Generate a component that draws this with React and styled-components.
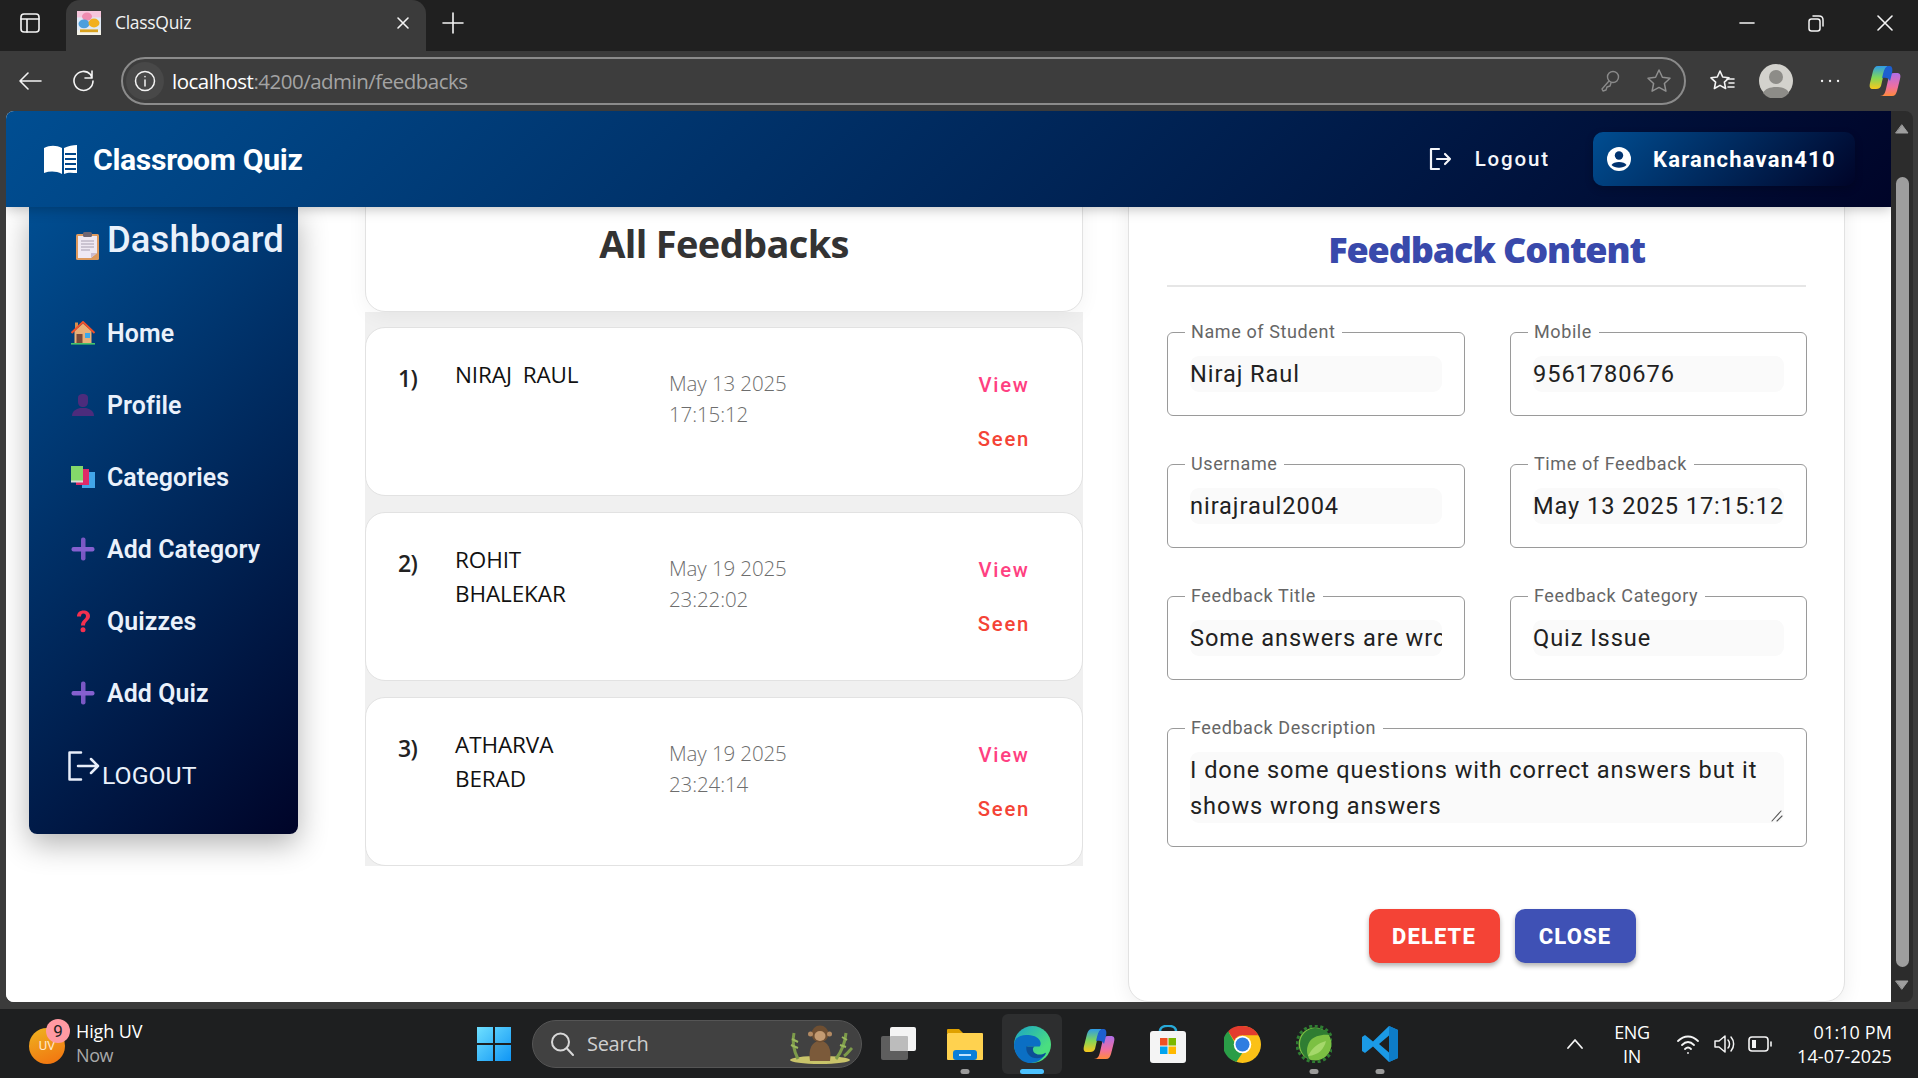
import React from "react";
import styled, { createGlobalStyle } from "styled-components";

const Global = createGlobalStyle`
  html, body { margin: 0; padding: 0; background: #3b3b3b; overflow: hidden; }
  * { box-sizing: border-box; }
  #root { width: 1918px; height: 1078px; }
`;
const Screen = styled.div`
  width: 1918px; height: 1078px; display: flex; flex-direction: column;
  font-family: Roboto, sans-serif; background: #3b3b3b; overflow: hidden;
`;
/* browser chrome */
const TabBar = styled.div`
  height: 51px; flex: none; background: #202020; display: flex; align-items: center; padding: 0 0 5px 20px;
`;
const ChromeGlyph = styled.svg`
  display: block; flex: none; fill: none; stroke: ${p => p.$c || "#f4f4f4"}; stroke-width: ${p => p.$w || 1.7}; stroke-linecap: round; stroke-linejoin: round;
`;
const Tab = styled.div`
  width: 360px; height: 51px; margin-left: 26px; background: #3b3b3b; border-radius: 14px 14px 0 0; align-self: flex-start;
  display: flex; align-items: center; padding: 0 16px 5px 11px;
`;
const TabTitle = styled.span`
  flex: 1; margin-left: 14px; color: #f2f2f2; font: 400 17.5px "Open Sans", sans-serif; letter-spacing: -0.3px; margin-top: -2px;
`;
const NewTab = styled.div` margin-left: 16px; `;
const WindowControls = styled.div`
  margin-left: auto; display: flex; align-items: center; gap: 53px; padding-right: 25px;
`;
const Toolbar = styled.div`
  height: 60px; flex: none; background: #3b3b3b; display: flex; align-items: center; padding: 0 14px 0 18px;
`;
const NavGap = styled.div` width: ${p => p.$w}px; flex: none; `;
const AddressPill = styled.div`
  width: 1565px; height: 48px; border: 2px solid #8b8b8b; border-radius: 24px; background: #3d3d3d;
  display: flex; align-items: center; padding: 0 12px 0 3px; flex: none;
`;
const InfoWrap = styled.div`
  width: 38px; height: 38px; border-radius: 50%; background: #484848; display: flex; align-items: center; justify-content: center; flex: none;
`;
const Url = styled.div`
  margin-left: 8px; font: 400 20.5px "Open Sans", sans-serif; letter-spacing: -0.5px; color: #a4a4a4; flex: 1; margin-top: -1px;
  b { font-weight: 400; color: #fff; }
`;
const PillIcons = styled.div` display: flex; align-items: center; gap: 26px; `;
const ToolIcons = styled.div` display: flex; align-items: center; margin-left: 23px; `;

/* page */
const ViewRow = styled.div`
  flex: 1; min-height: 0; display: flex; padding: 0 5px 7px 6px; background: #3b3b3b;
`;
const Page = styled.div`
  width: 1885px; background: #fff; border-radius: 8px 0 0 8px; overflow: hidden; display: flex; flex-direction: column;
`;
const Scrollbar = styled.div`
  width: 22px; background: #2c2c2c; border-radius: 0 8px 8px 0; display: flex; flex-direction: column; align-items: center; padding-top: 13px;
`;
const ScrollThumb = styled.div`
  width: 13px; height: 790px; background: #9e9e9e; border-radius: 7px; margin: 43px 0 13px;
`;
const Header = styled.header`
  height: 96px; flex: none; position: relative; z-index: 3;
  background: linear-gradient(135deg, #004e92, #000428);
  box-shadow: 0 2px 12px rgba(0,0,0,.25);
  display: flex; align-items: center; padding: 0 36px 0 37px; color: #fff;
`;
const Brand = styled.div`
  font-weight: 700; font-size: 30.2px; margin-left: 15px; letter-spacing: -0.35px; color: #fff;
`;
const HeaderLogout = styled.div`
  margin-left: auto; display: flex; align-items: center; gap: 23px; margin-right: 43px; font-weight: 500; font-size: 20.5px; letter-spacing: 1.85px; color: #f4f6fa;
`;
const UserChip = styled.div`
  width: 262px; height: 54px; border-radius: 10px; background: linear-gradient(135deg, #004e92, #000428);
  box-shadow: 0 3px 8px rgba(0,0,0,.2); display: flex; align-items: center; padding-left: 14px; gap: 22px;
  font-weight: 700; font-size: 22px; letter-spacing: 1.2px; color: #fff;
`;
const Main = styled.div`
  flex: 1; min-height: 0; display: flex; align-items: flex-start; background: #fff;
`;
const Sidebar = styled.aside`
  width: 269px; height: 627px; margin-left: 23px; flex: none; border-radius: 0 0 8px 8px;
  background: linear-gradient(135deg, #004e92, #000428);
  box-shadow: 0 10px 30px rgba(0,0,0,.3); color: #eaf1fb; display: flex; flex-direction: column; padding-left: 42px;
`;
const SideTitle = styled.div`
  display: flex; align-items: flex-start; height: 90px; padding: 9px 0 0 5px;
  font-weight: 500; font-size: 36.4px; line-height: 48px; letter-spacing: .1px; gap: 8px;
  svg { margin-top: 16px; }
`;
const SideItem = styled.div`
  height: 72px; display: flex; align-items: center; gap: 12px; font-weight: 600; font-size: 24.9px; letter-spacing: .1px;
`;
const SideLogout = styled.div`
  display: flex; align-items: flex-start; margin: 22px 0 0 -3px; gap: 2px; font-weight: 400; font-size: 24.8px;
  line-height: 32px;
  span { margin-top: 9px; }
`;
const Center = styled.section`
  width: 718px; flex: none; margin-left: 67px; display: flex; flex-direction: column; margin-top: -24px;
`;
const CardBase = styled.div`
  background: #fff; border: 1px solid #e2e2e2; border-radius: 20px;
`;
const TitleCard = styled(CardBase)`
  height: 129px; box-shadow: 0 4px 20px rgba(0,0,0,.05); padding-top: 34px; text-align: center; position: relative; z-index: 1;
  font: 700 38px/50px "Open Sans", sans-serif; letter-spacing: -0.65px; color: #333;
`;
const ListWrap = styled.div`
  background: #f0f0f0; display: flex; flex-direction: column; gap: 16px; padding-top: 15px;
`;
const ItemCard = styled(CardBase)`
  height: 169px; display: grid; grid-template-columns: 57px 214px 285px 100px; padding: 30px 0 0 32px;
  align-items: start; align-content: start;
`;
const Num = styled.div`
  font: 600 23px/40px "Open Sans", sans-serif; color: #222; letter-spacing: -0.6px;
`;
const Name = styled.div`
  font: 500 22.5px/34px "Open Sans", sans-serif; color: #111; letter-spacing: -0.1px; word-spacing: 5px; width: 150px;
`;
const DateText = styled.div`
  font: 300 20.5px/31px "Open Sans", sans-serif; color: #6d6d6d; letter-spacing: -0.1px; width: 140px; margin-top: 10px;
`;
const ActionCol = styled.div`
  display: flex; flex-direction: column; align-items: center; gap: 28px; margin-top: 14px;
`;
const TextAction = styled.div`
  font-weight: 500; font-size: 20.3px; line-height: 26px; letter-spacing: 1.75px; color: ${p => p.$c};
`;
const DetailCard = styled(CardBase)`
  width: 717px; height: 820px; margin-left: 45px; margin-top: -25px; flex: none; padding: 25px 38px 0; box-shadow: 0 4px 20px rgba(0,0,0,.07);
  display: flex; flex-direction: column;
`;
const DetailTitle = styled.div`
  height: 79px; border-bottom: 2px solid #e6e6e6; text-align: center; padding-top: 18px; flex: none;
  font: 800 36px/48px "Open Sans", sans-serif; letter-spacing: -1.15px; color: #3949ab;
`;
const FieldGrid = styled.div`
  display: grid; grid-template-columns: 298px 297px; column-gap: 45px; row-gap: 37px; margin-top: 34px;
`;
const Fieldset = styled.fieldset`
  margin: 0; padding: 13px 22px 23px 22px; min-width: 0; border: 1px solid #9a9a9a; border-radius: 6px; grid-column: ${p => p.$wide ? "1 / -1" : "auto"};
`;
const Legend = styled.legend`
  margin-left: -5px; padding: 0 7px 0 6px; font-size: 18px; line-height: 22px; letter-spacing: .6px; color: #666; font-weight: 400;
`;
const Value = styled.div`
  height: 36px; background: #fafafa; border-radius: 9px; font-size: 23.6px; line-height: 36px; letter-spacing: .93px; color: #212121;
  white-space: nowrap; overflow: hidden;
`;
const TimeValue = styled(Value)` overflow: visible; `;
const AreaValue = styled.div`
  height: 71px; background: #fafafa; border-radius: 9px; font-size: 23.6px; line-height: 36px; letter-spacing: .93px; color: #212121; position: relative;
  svg { position: absolute; right: 1px; bottom: 1px; }
`;
const Buttons = styled.div`
  display: flex; justify-content: center; gap: 15px; margin-top: 62px; margin-left: 31px;
`;
const ActionButton = styled.div`
  height: 54px; width: ${p => p.$w}px; border-radius: 10px; background: ${p => p.$bg}; color: #fff; font-weight: 800; font-size: 22px; letter-spacing: 1.1px;
  display: flex; align-items: center; justify-content: center; box-shadow: 0 3px 5px rgba(0,0,0,.3);
`;
/* taskbar */
const Taskbar = styled.footer`
  height: 69px; flex: none; background: #1e1f20; display: flex; align-items: center; color: #fff;
`;
const Weather = styled.div`
  width: 476px; flex: none; display: flex; align-items: center; padding-left: 29px; gap: 11px;
`;
const UvIcon = styled.div`
  width: 36px; height: 36px; border-radius: 50%; background: linear-gradient(160deg, #eeb420, #f2700f); font-size: 13px; display: flex; align-items: center; justify-content: center; color: #ffe9c8; margin-top: 4px; position: relative;
`;
const UvBadge = styled.div`
  position: absolute; right: -5px; top: -9px; width: 24px; height: 24px; border-radius: 50%; background: #ff9aa2; color: #222; font-size: 17px; display: flex; align-items: center; justify-content: center;
`;
const WeatherText = styled.div`
  font: 400 18px/24px "Open Sans", sans-serif; letter-spacing: -0.1px; margin-top: -1px;
  small { display: block; font-size: 18px; color: #a9a9a9; letter-spacing: -0.4px; }
`;
const SearchBox = styled.div`
  width: 330px; height: 48px; border-radius: 24px; background: #414141; border: 1px solid #555; margin-left: 20px; display: flex; align-items: center; padding: 0 7px 0 17px; font: 400 20px "Open Sans", sans-serif; color: #cfcfcf; letter-spacing: -0.3px; flex: none; gap: 13px;
  svg:last-child { margin-left: auto; }
`;
const TaskSlot = styled.div`
  width: ${p => p.$w}px; margin-left: ${p => p.$m}px; height: 60px; flex: none; display: flex; align-items: center; justify-content: center; position: relative; margin-top: 1px;
  border-radius: 6px; background: ${p => p.$active ? "#2d2e2f" : "transparent"};
`;
const RunDot = styled.div`
  position: absolute; left: 50%; bottom: 0; width: ${p => p.$active ? 24 : 9}px; height: 5px; border-radius: 3px; transform: translateX(-50%); background: ${p => p.$active ? "#4cc2ff" : "#9b9b9b"};
`;
const Tray = styled.div`
  margin-left: auto; display: flex; align-items: center; padding-right: 26px; font: 400 18px/24px "Open Sans", sans-serif; letter-spacing: -0.4px;
`;
const Lang = styled.div` text-align: center; margin-left: 30px; width: 36px; `;
const Clock = styled.div` text-align: right; margin-left: 24px; width: 96px; letter-spacing: .1px; `;
const TrayIcons = styled.div` display: flex; align-items: center; gap: 12px; margin-left: 26px; `;

const Ic = ({ w = 24, h = 24, vb, c, sw, children }) => (
  <ChromeGlyph width={w} height={h} viewBox={vb || `0 0 ${w} ${h}`} $c={c} $w={sw}>{children}</ChromeGlyph>
);
const Solid = styled.svg` display: block; flex: none; `;

const Favicon = () => (
  <Solid width="24" height="24" viewBox="0 0 24 30" preserveAspectRatio="none">
    <rect width="24" height="30" fill="#dfe9f6" />
    <rect width="24" height="8" fill="#f6c6dc" />
    <circle cx="10" cy="7" r="5" fill="#f08cb0" />
    <circle cx="7" cy="16" r="5.500" fill="#4c9fdc" />
    <circle cx="17" cy="15" r="5.500" fill="#f2b01e" />
    <rect y="24" width="24" height="6" fill="#f5f3e8" />
    <rect x="3" y="23" width="18" height="3.500" fill="#d9a21f" />
  </Solid>
);
const BookLogo = () => (
  <Solid width="35" height="30" viewBox="0 0 35 30">
    <path d="M1 4 C7 1 13 1 19 4 V30 C13 27 7 27 1 29 Z" fill="#fff" />
    <path d="M21 4 C25 2 30 1 34 1 V29 C30 29 25 28 21 30 Z" fill="#fff" />
    <path d="M22 10h11M22 15h11M22 20h11M22 25h11" stroke="#00468a" strokeWidth="1.8" />
  </Solid>
);
const LogoutIcon = () => (
  <Ic w={24} h={24} c="#f4f6fa" sw={2.200}>
    <path d="M11 2H3v20h8M9 12h13M17 7l5 5-5 5" />
  </Ic>
);
const SideLogoutIcon = () => (
  <Ic w={32} h={30} c="#e8eefa" sw={2.500}>
    <path d="M13 1.500H1.500v27H13M10 15h20M23 8l7 7-7 7" />
  </Ic>
);
const UserCircle = () => (
  <Solid width="24" height="26" viewBox="0 0 24 26">
    <circle cx="12" cy="13" r="12" fill="#fff" />
    <circle cx="12" cy="9.5" r="4.2" fill="#01336f" />
    <path d="M4.5 19c2-4 13-4 15 0-3.5 3.6-11.5 3.6-15 0Z" fill="#01336f" />
  </Solid>
);
const Clipboard = () => (
  <Solid width="23" height="28" viewBox="0 0 23 28">
    <rect x="0" y="2" width="23" height="26" rx="1.5" fill="#dd9a5e" />
    <path d="M2 4h19v17l-6 5H2Z" fill="#efe9f3" />
    <path d="M15 26l6-5h-6Z" fill="#cbbcd0" />
    <rect x="7" y="0" width="9" height="5" rx="1.5" fill="#6f6673" />
    <path d="M5 9h13M5 12h13M5 15h13M5 18h9" stroke="#a79fb0" strokeWidth="1" />
  </Solid>
);
const House = () => (
  <Solid width="24" height="24" viewBox="0 0 24 24">
    <rect x="4" y="1.5" width="3" height="6" fill="#d58f4e" />
    <path d="M3.5 10 12 2.5 20.5 10V22h-17Z" fill="#e8b078" />
    <path d="M0.5 12 12 1l11.5 11" fill="none" stroke="#f0512a" strokeWidth="2" />
    <rect x="5.5" y="13" width="6" height="9" fill="#7a4a3a" />
    <rect x="14" y="12" width="5" height="5" fill="#3aa8ea" />
    <rect y="22" width="24" height="1.6" fill="#45c46a" />
  </Solid>
);
const Bust = () => (
  <Solid width="24" height="24" viewBox="0 0 24 24">
    <path d="M7 5c0-3 2-4 5-4s5 1 5 4v4c0 3-2 5-5 5s-5-2-5-5Z" fill="#4c2c7c" />
    <path d="M1 23c0-5 4-7 8-8h6c4 1 8 3 8 8Z" fill="#4c2c7c" />
  </Solid>
);
const Books = () => (
  <Solid width="24" height="23" viewBox="0 0 24 23">
    <rect x="11" y="6" width="13" height="16" fill="#42a5e8" />
    <rect x="5" y="3" width="13" height="16" fill="#e02a68" />
    <rect x="0" y="0" width="12" height="16" fill="#84d86a" />
    <rect x="0" y="14.5" width="12" height="2" fill="#d8dfd8" />
  </Solid>
);
const Plus = () => (
  <Solid width="24" height="24" viewBox="0 0 24 24">
    <rect x="10" y="0.5" width="4.5" height="23" rx="2" fill="#7a58c4" />
    <rect x="0.5" y="10" width="23" height="4.5" rx="2" fill="#8560cf" />
  </Solid>
);
const Question = () => (
  <Solid width="24" height="24" viewBox="0 0 24 24">
    <path d="M6 7.5C6 3.5 9 1.5 12.5 1.5S19 3.500 19 7c0 4.500-5 5-5 9.500h-4c0-5.500 5-6 5-9.500 0-1.500-1-2.500-2.600-2.500C10.800 4.500 10 5.800 10 7.500Z" fill="#f4304f" />
    <circle cx="12" cy="20.800" r="2.500" fill="#f4304f" />
  </Solid>
);
const Resize = () => (
  <Ic w={12} h={12} c="#555" sw={1.1}><path d="M1 11 10 1M6 11l5-5" /></Ic>
);
const Monkey = () => (
  <Solid width="68" height="42" viewBox="0 0 68 42">
    <ellipse cx="34" cy="37" rx="30" ry="4" fill="#c9c46a" />
    <path d="M12 36C8 28 6 18 8 10M50 36c6-8 9-16 10-26M58 33c3-2 6-6 8-8" stroke="#7d9b4a" strokeWidth="3" fill="none" />
    <path d="M6 16l6 3M5 22l7 3M56 14l5 3M54 22l6 2" stroke="#9ab85d" strokeWidth="2" />
    <path d="M24 38c-2-12 2-20 10-20s12 8 10 20Z" fill="#7b5a3a" />
    <circle cx="34" cy="11" r="8.500" fill="#6f4f32" />
    <ellipse cx="34" cy="13" rx="5.500" ry="5" fill="#c49b72" />
    <circle cx="24.500" cy="11" r="2.500" fill="#b38a62" /><circle cx="43.500" cy="11" r="2.500" fill="#b38a62" />
  </Solid>
);
const TaskView = () => (
  <Solid width="36" height="36" viewBox="0 0 36 36">
    <rect x="1" y="10" width="27" height="24" rx="2" fill="#5e5e5e" />
    <rect x="10" y="1" width="26" height="24" rx="2" fill="#f4f4f4" />
    <rect x="10" y="10" width="18" height="15" rx="1" fill="#bcbcbc" />
  </Solid>
);
const Folder = () => (
  <Solid width="36" height="33" viewBox="0 0 36 33">
    <path d="M0 2a1 1 0 0 1 1-1h11l4 4H0Z" fill="#dfa100" />
    <rect y="5" width="36" height="27" rx="1" fill="#ffd24f" />
    <rect x="6" y="22" width="24" height="10" fill="#0a7fd8" rx="3" />
    <rect x="12" y="26" width="12" height="2" fill="#bfe2ff" />
  </Solid>
);
const Edge = ({ s = 37 }) => (
  <Solid width={s} height={s} viewBox="0 0 36 36">
    <defs>
      <linearGradient id="eg" x1="0" y1="0" x2="1" y2="1"><stop offset="0" stopColor="#1aa3c8" /><stop offset=".7" stopColor="#4ade80" /></linearGradient>
    </defs>
    <circle cx="18" cy="18" r="18" fill="url(#eg)" />
    <path d="M0 18C1 9 9 8 16 9c8 1 12 7 9 11H13c-1 6 5 10 12 9 3-1 5-2 6-3-3 6-8 10-15 10C7 36 0 28 0 18Z" fill="#0b6fc4" />
    <path d="M12 20c-1 8 6 13 14 11 3-1 5-3 5-5-5 3-10 2-12-1-1-2-1-4 1-5Z" fill="#0c4f96" />
  </Solid>
);
const Copilot = ({ s = 34 }) => (
  <Solid width={s} height={s} viewBox="0 0 34 34">
    <defs>
      <linearGradient id="cp1" x1="0" y1="0" x2="0" y2="1"><stop offset="0" stopColor="#2f9be8" /><stop offset=".5" stopColor="#7fd65a" /><stop offset="1" stopColor="#f8c71c" /></linearGradient>
      <linearGradient id="cp2" x1="0" y1="0" x2="0" y2="1"><stop offset="0" stopColor="#b06ee8" /><stop offset=".6" stopColor="#f06fa0" /><stop offset="1" stopColor="#ff8a3c" /></linearGradient>
    </defs>
    <path d="M10 2h12c-4 0-5 3-6 7l-3 13c-1 2-2 3-5 3H5C2 25 1 23 2 19L5 7c1-3 2-5 5-5Z" fill="url(#cp1)" />
    <path d="M24 32H12c4 0 5-3 6-7l3-13c1-2 2-3 5-3h3c3 0 4 2 3 6l-3 12c-1 3-2 5-5 5Z" fill="url(#cp2)" />
    <path d="M22 2h-2c-3 1-4 4-5 8l-1 4c4-1 7 0 8 3l2-8c1-4 0-7-2-7Z" fill="#1d5fd0" />
  </Solid>
);
const Store = () => (
  <Solid width="36" height="38" viewBox="0 0 36 38">
    <path d="M10 6c0-7 16-7 16 0" fill="none" stroke="#27a9d8" strokeWidth="2.500" />
    <rect y="6" width="36" height="32" rx="3" fill="#f4f4f4" />
    <rect x="10" y="13" width="7.500" height="7.500" fill="#ef5024" />
    <rect x="18.500" y="13" width="7.500" height="7.500" fill="#7cb800" />
    <rect x="10" y="21.500" width="7.500" height="7.500" fill="#00a4ef" />
    <rect x="18.500" y="21.500" width="7.500" height="7.500" fill="#ffb900" />
  </Solid>
);
const Chrome = () => (
  <Solid width="37" height="37" viewBox="0 0 36 36">
    <circle cx="18" cy="18" r="18" fill="#fbc116" />
    <path d="M18 0a18 18 0 0 1 15.600 9H18a9 9 0 0 0-8 5L4 5A18 18 0 0 1 18 0Z" fill="#e33b2e" />
    <path d="M4 5l7 12 7 9-6 9A18 18 0 0 1 4 5Z" fill="#2a9d47" />
    <circle cx="18" cy="18" r="8.500" fill="#fff" /><circle cx="18" cy="18" r="6.800" fill="#2f7de1" />
  </Solid>
);
const Spring = () => (
  <Solid width="36" height="38" viewBox="0 0 36 38">
    <circle cx="19" cy="19" r="16.500" fill="#7cc043" />
    <circle cx="19" cy="19" r="18" fill="none" stroke="#2f7d32" strokeWidth="3" strokeDasharray="3 2.600" />
    <path d="M19 3a16 16 0 0 0-15 16c0 7 4 13 10 16-4-6-4-13 0-19 4-5 12-7 20-6-3-4-9-7-15-7Z" fill="#2f7d32" />
    <path d="M12 31c4-8 10-13 18-15-2 8-7 14-18 15Z" fill="#a5d86b" />
  </Solid>
);
const VsCode = () => (
  <Solid width="36" height="38" viewBox="0 0 36 38">
    <path d="M27 1l9 4v28l-9 4L11 21.500 3 28l-3-2V12l3-2 8 6.500Zm0 9.500L17 19l10 8.500Z" fill="#1b9ae6" />
    <path d="M27 1l9 4v28l-9 4Z" fill="#0d7cc8" />
  </Solid>
);
const WindowsLogo = () => (
  <Solid width="36" height="36" viewBox="0 0 36 36">
    <defs>
      <linearGradient id="wl" x1="0" y1="0" x2="1" y2="1"><stop offset="0" stopColor="#6fe0ff" /><stop offset="1" stopColor="#0f95f5" /></linearGradient>
    </defs>
    <path d="M1 1h16v16H1ZM19 1h16v16H19ZM1 19h16v16H1ZM19 19h16v16H19Z" fill="url(#wl)" />
  </Solid>
);
const Avatar = () => (
  <Solid width="34" height="34" viewBox="0 0 34 34">
    <circle cx="17" cy="17" r="17" fill="#d3d2cd" />
    <circle cx="17" cy="13" r="7" fill="#8d8c88" />
    <path d="M4 29c3-8 23-8 26 0a17 17 0 0 1-26 0Z" fill="#8d8c88" />
  </Solid>
);

const menu = [
  [House, "Home"], [Bust, "Profile"], [Books, "Categories"], [Plus, "Add Category"], [Question, "Quizzes"], [Plus, "Add Quiz"],
];
const items = [
  ["1)", "NIRAJ RAUL", "May 13 2025", "17:15:12"],
  ["2)", "ROHIT BHALEKAR", "May 19 2025", "23:22:02"],
  ["3)", "ATHARVA BERAD", "May 19 2025", "23:24:14"],
];
const fields = [
  ["Name of Student", "Niraj Raul"], ["Mobile", "9561780676"], ["Username", "nirajraul2004"],
  ["Time of Feedback", "May 13 2025 17:15:12", true], ["Feedback Title", "Some answers are wrong"], ["Feedback Category", "Quiz Issue"],
];

export default function App() {
  return (
    <Screen>
      <Global />
      <TabBar>
        <Ic w={20} h={20} sw={1.6}><rect x="1" y="1" width="18" height="18" rx="3" /><path d="M1 6h18M7 6v13" /></Ic>
        <Tab>
          <Favicon />
          <TabTitle>ClassQuiz</TabTitle>
          <Ic w={14} h={14} sw={1.6}><path d="M2 2l10 10M12 2 2 12" /></Ic>
        </Tab>
        <NewTab><Ic w={22} h={22} sw={1.6}><path d="M11 1v20M1 11h20" /></Ic></NewTab>
        <WindowControls>
          <Ic w={16} h={4} sw={1.6}><path d="M1 2h14" /></Ic>
          <Ic w={16} h={17} sw={1.5}><rect x="1" y="4" width="11" height="12" rx="2.500" /><path d="M5 1h6c3 0 4 1 4 4v6" /></Ic>
          <Ic w={16} h={16} sw={1.6}><path d="M1 1l14 14M15 1 1 15" /></Ic>
        </WindowControls>
      </TabBar>
      <Toolbar>
        <Ic w={24} h={20} sw={1.6} ><path d="M23 10H2M10 2l-8 8 8 8" /></Ic>
        <NavGap $w={30} />
        <Ic w={24} h={24} sw={1.6}><path d="M20 2v7h-7M21 12a9.500 9.500 0 1 1-2.500-6.500L20 9" /></Ic>
        <NavGap $w={25} />
        <AddressPill>
          <InfoWrap><Ic w={22} h={22} sw={1.5}><circle cx="11" cy="11" r="9.500" /><path d="M11 10v6M11 6.500v.2" /></Ic></InfoWrap>
          <Url><b>localhost</b>:4200/admin/feedbacks</Url>
          <PillIcons>
            <Ic w={20} h={24} c="#8a8a8a" sw={1.4}><circle cx="13" cy="8" r="5.500" /><path d="M9 12 2 20l1 2 3-1 1-3 3-1 1-3" /></Ic>
            <Ic w={26} h={26} c="#8f8f8f" sw={1.5}><path d="M13 2l3.400 7.200 7.600 1-5.600 5.300 1.500 7.700L13 19.400l-6.900 3.800 1.500-7.700L2 10.200l7.600-1Z" /></Ic>
          </PillIcons>
        </AddressPill>
        <ToolIcons>
          <Ic w={26} h={26} sw={1.6}><path d="M11 3l2.700 6 6.300.800-4.600 4.300 1.200 6.400L11 17.400l-5.600 3.100 1.200-6.400L2 9.800 8.300 9Z" /><path d="M18 11h7M20 15h5M19 19h6" /></Ic>
          <NavGap $w={24} />
          <Avatar />
          <NavGap $w={27} />
          <Ic w={20} h={4} sw={2.300}><path d="M2 2h.1M10 2h.1M18 2h.1" /></Ic>
          <NavGap $w={28} />
          <Copilot />
        </ToolIcons>
      </Toolbar>
      <ViewRow>
        <Page>
          <Header>
            <BookLogo />
            <Brand>Classroom Quiz</Brand>
            <HeaderLogout><LogoutIcon />Logout</HeaderLogout>
            <UserChip><UserCircle />Karanchavan410</UserChip>
          </Header>
          <Main>
            <Sidebar>
              <SideTitle><Clipboard />Dashboard</SideTitle>
              {menu.map(([Icon, label]) => (
                <SideItem key={label}><Icon />{label}</SideItem>
              ))}
              <SideLogout><SideLogoutIcon /><span>LOGOUT</span></SideLogout>
            </Sidebar>
            <Center>
              <TitleCard>All Feedbacks</TitleCard>
              <ListWrap>
                {items.map(([n, name, d, t]) => (
                  <ItemCard key={n}>
                    <Num>{n}</Num>
                    <Name>{name}</Name>
                    <DateText>{d}<br />{t}</DateText>
                    <ActionCol>
                      <TextAction $c="#ff4081">View</TextAction>
                      <TextAction $c="#f44336">Seen</TextAction>
                    </ActionCol>
                  </ItemCard>
                ))}
              </ListWrap>
            </Center>
            <DetailCard>
              <DetailTitle>Feedback Content</DetailTitle>
              <FieldGrid>
                {fields.map(([label, value, full]) => (
                  <Fieldset key={label}>
                    <Legend>{label}</Legend>
                    {full ? <TimeValue>{value}</TimeValue> : <Value>{value}</Value>}
                  </Fieldset>
                ))}
                <Fieldset $wide>
                  <Legend>Feedback Description</Legend>
                  <AreaValue>I done some questions with correct answers but it shows wrong answers<Resize /></AreaValue>
                </Fieldset>
              </FieldGrid>
              <Buttons>
                <ActionButton $bg="#f44336" $w={131}>DELETE</ActionButton>
                <ActionButton $bg="#3f51b5" $w={121}>CLOSE</ActionButton>
              </Buttons>
            </DetailCard>
          </Main>
        </Page>
        <Scrollbar>
          <Ic w={14} h={10} c="#9e9e9e" sw={1}><path d="M7 1l6 8H1Z" fill="#9e9e9e" /></Ic>
          <ScrollThumb />
          <Ic w={14} h={10} c="#9e9e9e" sw={1}><path d="M7 9l6-8H1Z" fill="#9e9e9e" /></Ic>
        </Scrollbar>
      </ViewRow>
      <Taskbar>
        <Weather>
          <UvIcon>UV<UvBadge>9</UvBadge></UvIcon>
          <WeatherText>High UV<small>Now</small></WeatherText>
        </Weather>
        <WindowsLogo />
        <SearchBox>
          <Ic w={24} h={26} c="#d8d8d8" sw={2}><circle cx="10.500" cy="11" r="8.500" /><path d="M17 17.500l6 6.500" /></Ic>
          Search
          <Monkey />
        </SearchBox>
        <TaskSlot $w={36} $m={18}><TaskView /></TaskSlot>
        <TaskSlot $w={36} $m={31}><Folder /><RunDot /></TaskSlot>
        <TaskSlot $w={60} $m={19} $active><Edge /><RunDot $active /></TaskSlot>
        <TaskSlot $w={36} $m={19}><Copilot /></TaskSlot>
        <TaskSlot $w={36} $m={33}><Store /></TaskSlot>
        <TaskSlot $w={37} $m={38}><Chrome /></TaskSlot>
        <TaskSlot $w={36} $m={35}><Spring /><RunDot /></TaskSlot>
        <TaskSlot $w={36} $m={30}><VsCode /><RunDot /></TaskSlot>
        <Tray>
          <Ic w={18} h={12} sw={1.800}><path d="M2 10l7-8 7 8" /></Ic>
          <Lang>ENG<br />IN</Lang>
          <TrayIcons>
            <Ic w={24} h={24} sw={1.800}><path d="M2 9c6-6 14-6 20 0M6 13c4-4 8-4 12 0M9 17c2-2 4-2 6 0M12 21v.1" /></Ic>
            <Ic w={24} h={24} sw={1.500}><path d="M3 9v6h4l6 5V4L7 9ZM16 8c2 2 2 6 0 8M19 5c3.500 4 3.500 10 0 14" /></Ic>
            <Ic w={24} h={18} sw={1.600}><rect x="1" y="2" width="19" height="14" rx="3" /><path d="M23 7v4" /><rect x="4" y="5" width="4" height="8" fill="#f4f4f4" stroke="none" /></Ic>
          </TrayIcons>
          <Clock>01:10 PM<br />14-07-2025</Clock>
        </Tray>
      </Taskbar>
    </Screen>
  );
}
